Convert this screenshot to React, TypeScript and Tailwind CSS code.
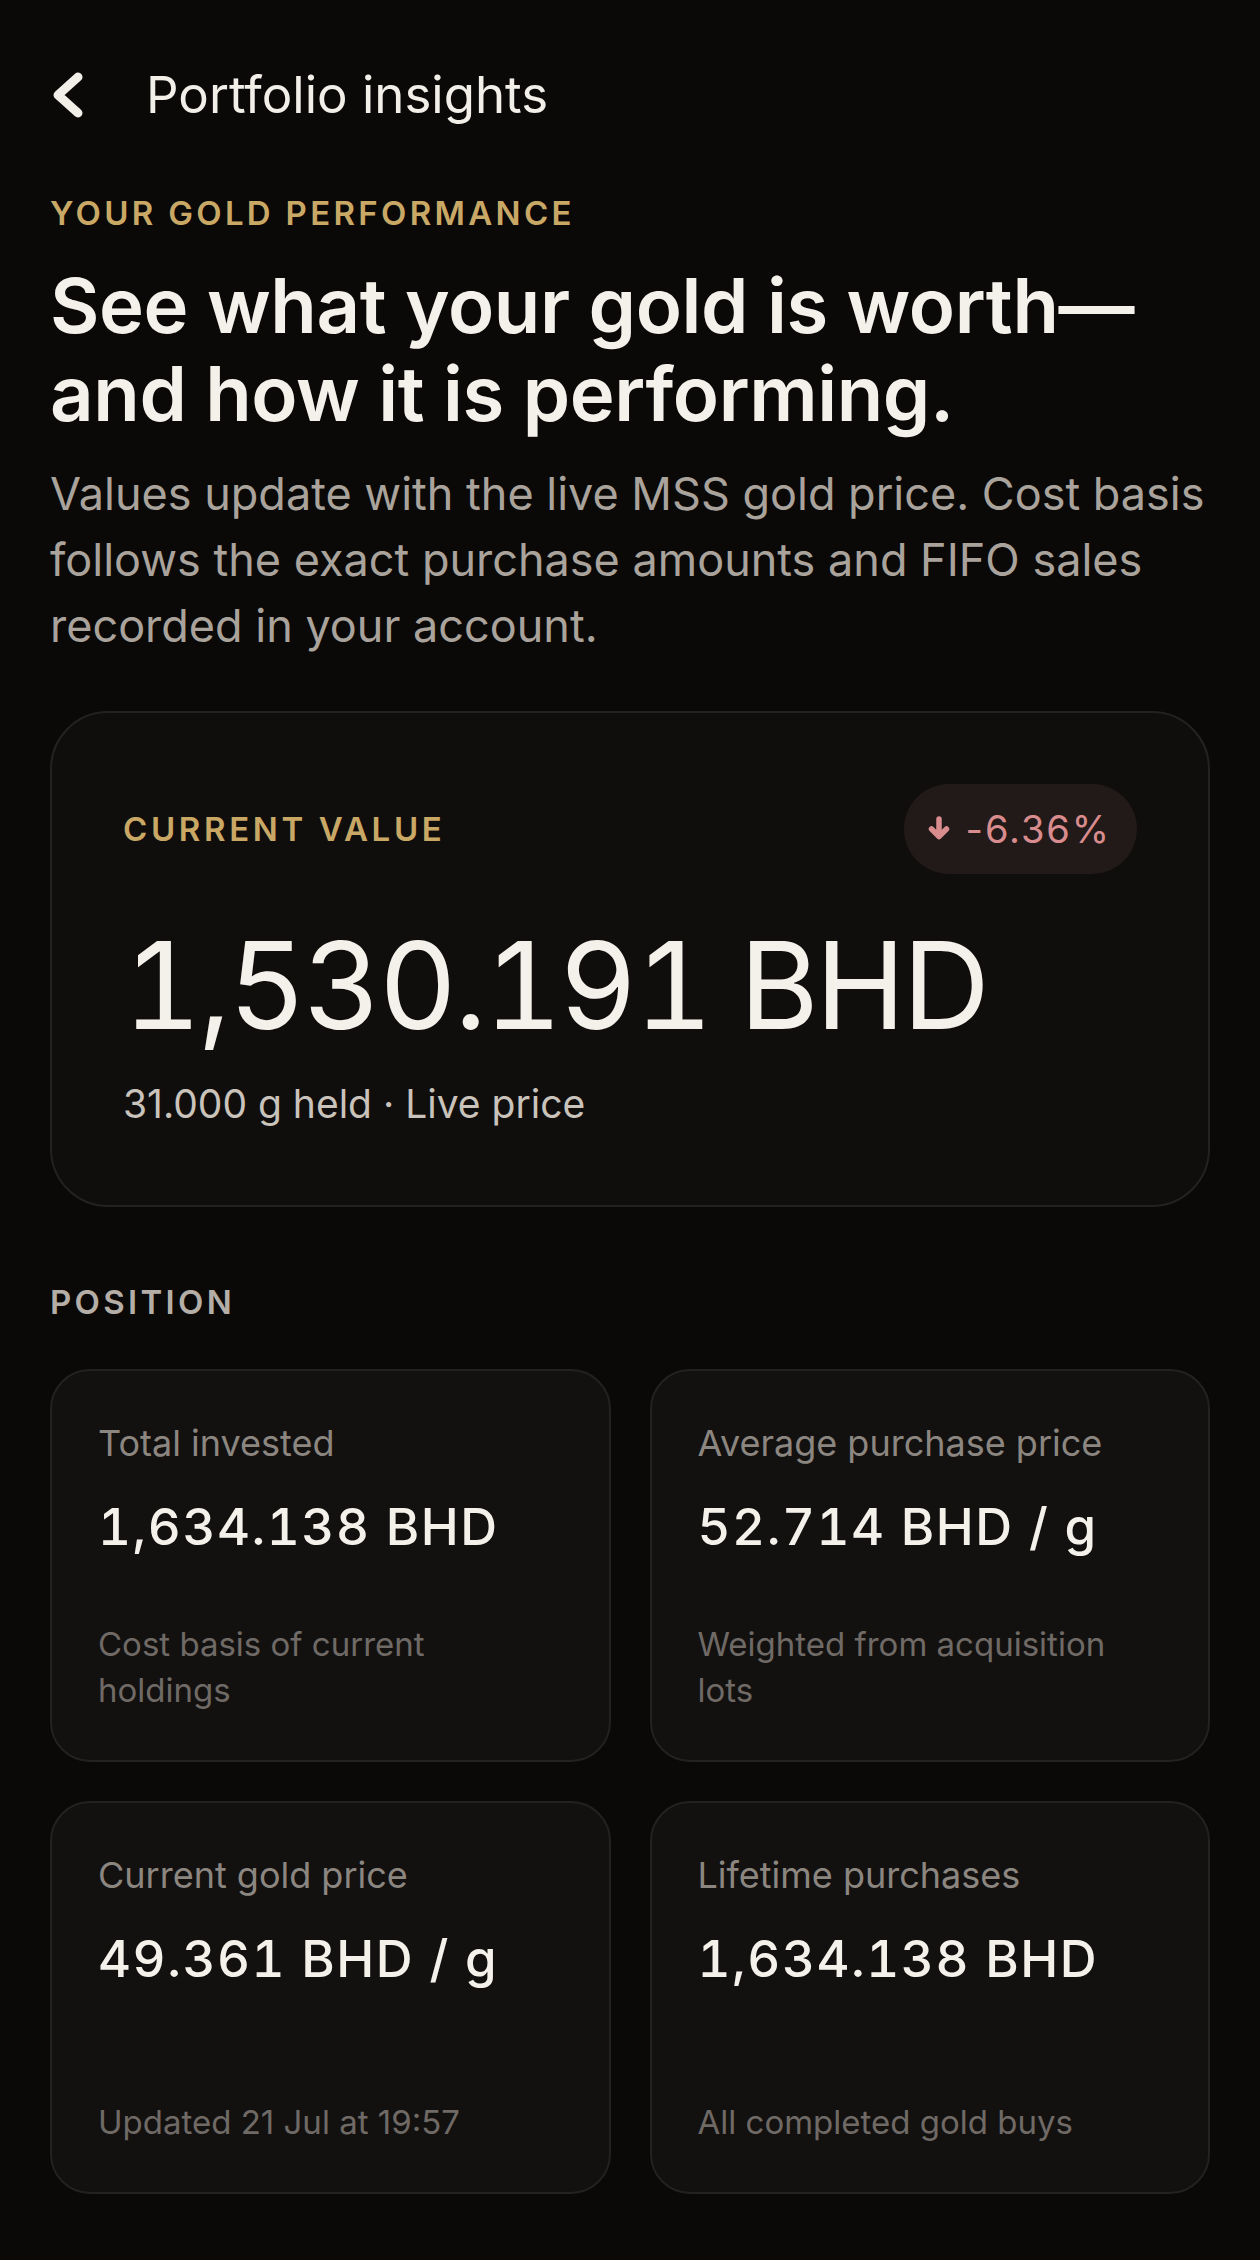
import React from "react";

function BackIcon() {
  return (
    <svg width="34" height="46" viewBox="0 0 34 46" fill="none">
      <path d="M28 5 L8 23 L28 41" stroke="#f2efe9" strokeWidth="9" strokeLinecap="round" strokeLinejoin="round" />
    </svg>
  );
}

function ArrowDown() {
  return (
    <svg width="26" height="26" viewBox="0 0 26 26" fill="none">
      <path d="M13 3 L13 20 M5.5 13 L13 20.5 L20.5 13" stroke="#d98c8e" strokeWidth="5.5" strokeLinecap="round" strokeLinejoin="round" />
    </svg>
  );
}

type Stat = { label: string; value: string; note: string };

const stats: Stat[] = [
  { label: "Total invested", value: "1,634.138 BHD", note: "Cost basis of current holdings" },
  { label: "Average purchase price", value: "52.714 BHD / g", note: "Weighted from acquisition lots" },
  { label: "Current gold price", value: "49.361 BHD / g", note: "Updated 21 Jul at 19:57" },
  { label: "Lifetime purchases", value: "1,634.138 BHD", note: "All completed gold buys" },
];

function StatCard({ s }: { s: Stat }) {
  return (
    <div className="flex h-[393px] flex-col rounded-[40px] border-2 border-[#24211f] bg-[#131110] px-[46px] pt-[46px] pb-[47px]">
      <div className="text-[36px] leading-[52px] text-[#8c8680]">{s.label}</div>
      <div className="mt-[28px] text-[51px] leading-[60px] font-medium tabular-nums tracking-[0.03em] text-[#f4f1eb]">{s.value}</div>
      <div className="mt-auto max-w-[430px] text-[33px] leading-[46px] text-[#6f6a65]">{s.note}</div>
    </div>
  );
}

export default function App() {
  return (
    <div className="min-h-[2260px] w-full bg-[#0a0908] font-['Inter',sans-serif] antialiased">
      <div className="px-[50px] pt-[60px] pb-[60px]">
        <div className="flex h-[70px] items-center">
          <BackIcon />
          <div className="ml-[62px] text-[51px] leading-[70px] text-[#f2efe9]">Portfolio insights</div>
        </div>

        <div className="mt-[60px] text-[33px] leading-[46px] font-semibold tracking-[0.1em] text-[#c9a866]">
          YOUR GOLD PERFORMANCE
        </div>
        <h1 className="mt-[25px] text-[76px] leading-[88px] font-semibold tracking-[-0.005em] text-[#f4f1eb]">
          See what your gold is worth—
          <br />
          and how it is performing.
        </h1>
        <p className="mt-[24px] text-[45px] leading-[66px] text-[#a9a39c]">
          Values update with the live MSS gold price. Cost basis follows the exact purchase amounts and FIFO sales recorded in your account.
        </p>

        <div className="mt-[52px] rounded-[58px] border-2 border-[#24211f] bg-[#100e0d] p-[71px]">
          <div className="flex h-[90px] items-center justify-between">
            <div className="text-[33px] leading-[46px] font-semibold tracking-[0.11em] text-[#c9a866]">CURRENT VALUE</div>
            <div className="flex h-[90px] items-center gap-[14px] rounded-full bg-[#221a19] pl-[22px] pr-[26px]">
              <ArrowDown />
              <span className="text-[38px] leading-[46px] tracking-[0.05em] text-[#d98c8e]">-6.36%</span>
            </div>
          </div>
          <div className="mt-[51px] text-[121px] leading-[121px] tabular-nums tracking-[-0.025em] text-[#f4f1eb]">1,530.191 BHD</div>
          <div className="mt-[28px] text-[39px] leading-[60px] text-[#c9c3bb]">31.000 g held · Live price</div>
        </div>

        <div className="mt-[72px] text-[33px] leading-[46px] font-semibold tracking-[0.1em] text-[#b5aea6]">POSITION</div>

        <div className="mt-[44px] grid grid-cols-2 gap-[39px]">
          {stats.map((s) => (
            <StatCard key={s.label} s={s} />
          ))}
        </div>
      </div>
    </div>
  );
}
